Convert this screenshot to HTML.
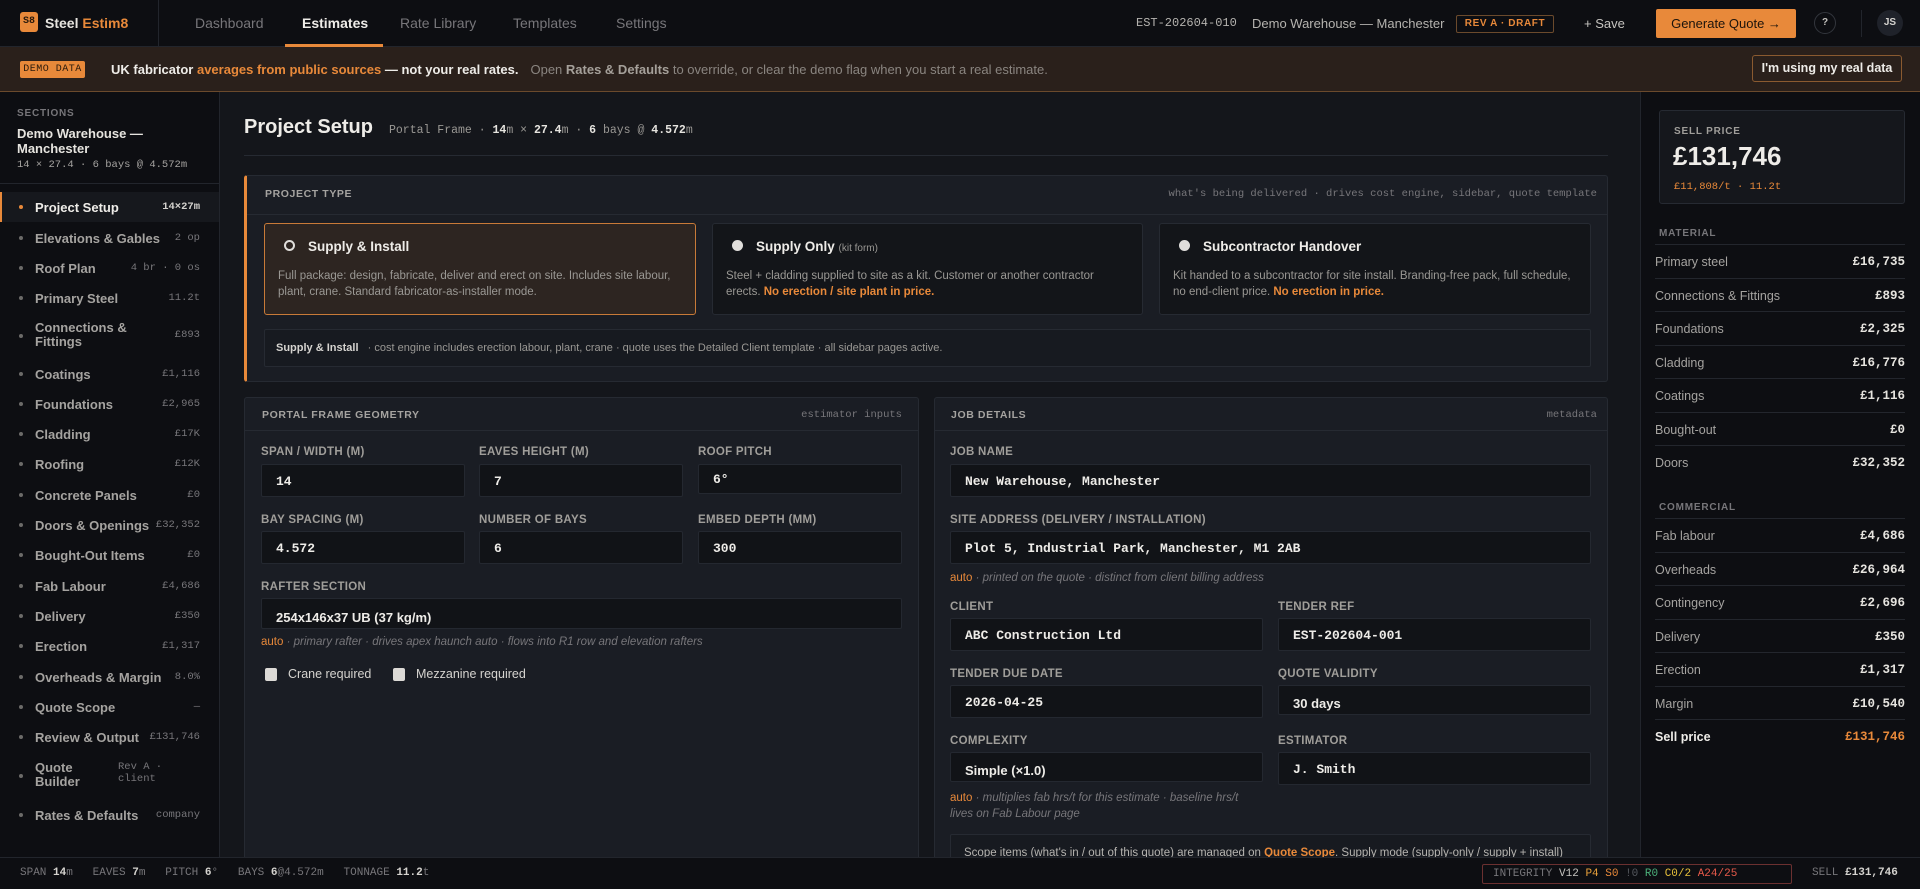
<!DOCTYPE html>
<html><head><meta charset="utf-8"><style>
*{box-sizing:border-box;margin:0;padding:0}
body{width:1920px;height:889px;overflow:hidden;background:#0d0e12;font-family:"Liberation Sans",sans-serif;color:#e6e4df;position:relative;font-size:13px}
.a{position:absolute;white-space:nowrap}
.m{font-family:"Liberation Mono",monospace}
.or{color:#e8893a}
.nav{position:absolute;left:0;top:0;width:1920px;height:47px;background:#0d0e12;border-bottom:1px solid #22252c}
.ban{position:absolute;left:0;top:47px;width:1920px;height:45px;background:#2a201b;border-bottom:1px solid #6b4a2c}
.side{position:absolute;left:0;top:92px;width:220px;height:765px;background:#0d0e12;border-right:1px solid #22252c}
.main{position:absolute;left:220px;top:92px;width:1420px;height:765px;background:#14161b}
.right{position:absolute;left:1640px;top:92px;width:280px;height:765px;background:#0d0e12;border-left:1px solid #22252c}
.pan{position:absolute;background:#1a1d24;border:1px solid #262a32;border-radius:3px}
.ph{font-size:10.5px;font-weight:bold;letter-spacing:.6px;color:#a5a3a0}
.lab{position:absolute;font-size:11.5px;font-weight:bold;color:#a09e9a;letter-spacing:.3px;white-space:nowrap}
.in{position:absolute;background:#111317;border:1px solid #242830;border-radius:2px;height:33px;font-family:"Liberation Mono",monospace;font-size:13px;color:#eeece8;padding:9px 14px;font-weight:bold;white-space:nowrap;overflow:hidden}
.hint{position:absolute;font-size:11.5px;font-style:italic;color:#77767a;white-space:nowrap}
.si{position:absolute;left:0;width:219px;height:28px}
.si .d{position:absolute;left:19px;top:12px;width:4px;height:4px;border-radius:2px;background:#6b6a68}
.si .t{position:absolute;left:35px;top:7px;font-size:13px;font-weight:bold;color:#a5a3a0;white-space:nowrap}
.si .v{position:absolute;right:19px;top:8px;font-family:"Liberation Mono",monospace;font-size:10.5px;color:#77767a}
.rr{position:absolute;left:1655px;width:250px;height:34px;border-top:1px solid #23262d;font-size:12.5px;color:#a5a3a0}
.rr span{position:absolute;top:10px}
.rr .v{right:0;font-family:"Liberation Mono",monospace;font-weight:bold;color:#e6e4df;font-size:12.5px}
.opt{position:absolute;top:223px;height:92px;background:#131519;border:1px solid #262a32;border-radius:3px}
.opt .r{position:absolute;left:19px;top:16px;width:11px;height:11px;border-radius:6px;background:#e0dedb}
.opt .h{position:absolute;left:43px;top:15px;font-size:13.5px;font-weight:bold;color:#eeece8;white-space:nowrap}
.opt .p{position:absolute;left:13px;top:44px;right:12px;font-size:11.5px;line-height:16px;color:#9a9894}
.cb{position:absolute;top:668px;width:12px;height:13px;border-radius:2px;background:#dcdad6}
</style></head><body>

<div class="nav">
  <div class="a" style="left:20px;top:12px;width:18px;height:20px;background:#e8893a;border-radius:3px;color:#2a1a0c;font-family:'Liberation Mono',monospace;font-size:10px;font-weight:bold;text-align:center;line-height:20px">S8</div>
  <div class="a" style="left:45px;top:15px;font-size:14px;font-weight:bold">Steel <span class="or">Estim8</span></div>
  <div class="a" style="left:158px;top:0;width:1px;height:47px;background:#22252c"></div>
  <div class="a" style="left:195px;top:15px;font-size:14px;color:#77767a">Dashboard</div>
  <div class="a" style="left:302px;top:15px;font-size:14px;font-weight:bold;color:#eeece8">Estimates</div>
  <div class="a" style="left:285px;top:44px;width:98px;height:3px;background:#e8893a"></div>
  <div class="a" style="left:400px;top:15px;font-size:14px;color:#77767a">Rate Library</div>
  <div class="a" style="left:513px;top:15px;font-size:14px;color:#77767a">Templates</div>
  <div class="a" style="left:616px;top:15px;font-size:14px;color:#77767a">Settings</div>
  <div class="a m" style="left:1136px;top:16px;font-size:12px;color:#b5b3af">EST-202604-010</div>
  <div class="a" style="left:1252px;top:16px;font-size:13px;color:#b5b3af">Demo Warehouse — Manchester</div>
  <div class="a" style="left:1456px;top:15px;width:98px;height:18px;border:1px solid #6b4a2c;border-radius:2px;color:#e8893a;font-size:10px;font-weight:bold;letter-spacing:.6px;text-align:center;line-height:16px">REV A · DRAFT</div>
  <div class="a" style="left:1584px;top:16px;font-size:13px;color:#c5c3bf">+ Save</div>
  <div class="a" style="left:1656px;top:9px;width:140px;height:29px;background:#e8893a;border-radius:2px;color:#1c140c;font-size:13px;text-align:center;line-height:29px">Generate Quote →</div>
  <div class="a" style="left:1814px;top:12px;width:22px;height:22px;border:1px solid #33363d;border-radius:11px;color:#c5c3bf;font-size:10px;font-weight:bold;text-align:center;line-height:20px">?</div>
  <div class="a" style="left:1861px;top:10px;width:1px;height:27px;background:#22252c"></div>
  <div class="a" style="left:1877px;top:10px;width:26px;height:26px;background:#1f222a;border-radius:13px;color:#d5d3cf;font-size:10px;font-weight:bold;text-align:center;line-height:26px">JS</div>
</div>

<div class="ban">
  <div class="a m" style="left:20px;top:14px;width:65px;height:17px;background:#e8893a;border-radius:2px;color:#2a1a0c;font-size:10px;letter-spacing:.5px;text-align:center;line-height:17px">DEMO DATA</div>
  <div class="a" style="left:111px;top:15px;font-size:13px;color:#eeece8"><b>UK fabricator <span class="or">averages from public sources</span> — not your real rates.</b><span style="margin-left:12px;color:#8a8580">Open <b style="color:#a5a09a">Rates &amp; Defaults</b> to override, or clear the demo flag when you start a real estimate.</span></div>
  <div class="a" style="left:1752px;top:8px;width:150px;height:27px;border:1px solid #8a5a30;border-radius:3px;font-size:12.5px;font-weight:bold;color:#eeece8;text-align:center;line-height:25px">I'm using my real data</div>
</div>

<div class="side">
  <div class="a" style="left:17px;top:16px;font-size:10px;font-weight:bold;letter-spacing:.8px;color:#77767a">SECTIONS</div>
  <div class="a" style="left:17px;top:34px;font-size:13px;font-weight:bold;line-height:15px;white-space:normal;width:150px">Demo Warehouse — Manchester</div>
  <div class="a m" style="left:17px;top:67px;font-size:10.5px;color:#a5a3a0">14 × 27.4 · 6 bays @ 4.572m</div>
  <div class="a" style="left:0;top:91px;width:219px;height:1px;background:#22252c"></div>
  <div class="si" style="top:100px;height:30px;background:#16181d"><div class="a" style="left:0;top:0;width:2px;height:30px;background:#e8893a"></div><div class="d" style="background:#e8893a;top:13px"></div><div class="t" style="color:#eeece8;top:8px">Project Setup</div><div class="v" style="color:#d5d3cf;font-weight:bold;top:9px">14×27m</div></div>
  <div class="si" style="top:132px"><div class="d"></div><div class="t">Elevations &amp; Gables</div><div class="v">2 op</div></div>
  <div class="si" style="top:162px"><div class="d"></div><div class="t">Roof Plan</div><div class="v">4 br · 0 os</div></div>
  <div class="si" style="top:192px"><div class="d"></div><div class="t">Primary Steel</div><div class="v">11.2t</div></div>
  <div class="si" style="top:222px;height:44px"><div class="d" style="top:20px"></div><div class="t" style="line-height:14px">Connections &amp;<br>Fittings</div><div class="v" style="top:15px">£893</div></div>
  <div class="si" style="top:268px"><div class="d"></div><div class="t">Coatings</div><div class="v">£1,116</div></div>
  <div class="si" style="top:298px"><div class="d"></div><div class="t">Foundations</div><div class="v">£2,965</div></div>
  <div class="si" style="top:328px"><div class="d"></div><div class="t">Cladding</div><div class="v">£17K</div></div>
  <div class="si" style="top:358px"><div class="d"></div><div class="t">Roofing</div><div class="v">£12K</div></div>
  <div class="si" style="top:389px"><div class="d"></div><div class="t">Concrete Panels</div><div class="v">£0</div></div>
  <div class="si" style="top:419px"><div class="d"></div><div class="t">Doors &amp; Openings</div><div class="v">£32,352</div></div>
  <div class="si" style="top:449px"><div class="d"></div><div class="t">Bought-Out Items</div><div class="v">£0</div></div>
  <div class="si" style="top:480px"><div class="d"></div><div class="t">Fab Labour</div><div class="v">£4,686</div></div>
  <div class="si" style="top:510px"><div class="d"></div><div class="t">Delivery</div><div class="v">£350</div></div>
  <div class="si" style="top:540px"><div class="d"></div><div class="t">Erection</div><div class="v">£1,317</div></div>
  <div class="si" style="top:571px"><div class="d"></div><div class="t">Overheads &amp; Margin</div><div class="v">8.0%</div></div>
  <div class="si" style="top:601px"><div class="d"></div><div class="t">Quote Scope</div><div class="v">—</div></div>
  <div class="si" style="top:631px"><div class="d"></div><div class="t">Review &amp; Output</div><div class="v">£131,746</div></div>
  <div class="si" style="top:662px;height:44px"><div class="d" style="top:20px"></div><div class="t" style="line-height:14px">Quote<br>Builder</div><div class="v" style="left:118px;right:auto;top:7px;line-height:12px">Rev A ·<br>client</div></div>
  <div class="si" style="top:709px"><div class="d"></div><div class="t">Rates &amp; Defaults</div><div class="v">company</div></div>
</div>

<div class="main"></div>
<div class="a" style="left:244px;top:116px;font-size:20px;font-weight:bold;color:#eeece8">Project Setup</div>
<div class="a m" style="left:389px;top:124px;font-size:11.5px;color:#9a9894">Portal Frame · <b style="color:#e6e4df">14</b>m × <b style="color:#e6e4df">27.4</b>m · <b style="color:#e6e4df">6</b> bays @ <b style="color:#e6e4df">4.572</b>m</div>
<div class="a" style="left:244px;top:155px;width:1364px;height:1px;background:#262a32"></div>

<div class="pan" style="left:244px;top:175px;width:1364px;height:207px;border-left:3px solid #e8893a">
  <div class="a ph" style="left:18px;top:12px">PROJECT TYPE</div>
  <div class="a m" style="right:10px;top:12px;font-size:10.5px;color:#77767a">what's being delivered · drives cost engine, sidebar, quote template</div>
  <div class="a" style="left:0;top:38px;width:1361px;height:1px;background:#262a32"></div>
</div>
<div class="opt" style="left:264px;width:432px;background:#2d2521;border-color:#c87a38"><div class="r" style="background:none;border:2.5px solid #e0dedb"></div><div class="h">Supply &amp; Install</div><div class="p">Full package: design, fabricate, deliver and erect on site. Includes site labour, plant, crane. Standard fabricator-as-installer mode.</div></div>
<div class="opt" style="left:712px;width:431px"><div class="r"></div><div class="h">Supply Only <span style="font-size:10px;font-weight:normal;color:#9a9894">(kit form)</span></div><div class="p">Steel + cladding supplied to site as a kit. Customer or another contractor erects. <b class="or">No erection / site plant in price.</b></div></div>
<div class="opt" style="left:1159px;width:432px"><div class="r"></div><div class="h">Subcontractor Handover</div><div class="p">Kit handed to a subcontractor for site install. Branding-free pack, full schedule, no end-client price. <b class="or">No erection in price.</b></div></div>
<div class="a" style="left:264px;top:329px;width:1327px;height:38px;background:#171a20;border:1px solid #262a32;border-radius:2px"></div>
<div class="a" style="left:276px;top:342px;font-size:11px;color:#9a9894"><b style="color:#d5d3cf">Supply &amp; Install</b> &nbsp; · cost engine includes erection labour, plant, crane · quote uses the Detailed Client template · all sidebar pages active.</div>

<div class="pan" style="left:244px;top:397px;width:675px;height:470px">
  <div class="a ph" style="left:17px;top:11px">PORTAL FRAME GEOMETRY</div>
  <div class="a m" style="right:16px;top:11px;font-size:10.5px;color:#77767a">estimator inputs</div>
  <div class="a" style="left:0;top:32px;width:673px;height:1px;background:#262a32"></div>
</div>
<div class="lab" style="left:261px;top:446px">SPAN / WIDTH (M)</div>
<div class="lab" style="left:479px;top:446px">EAVES HEIGHT (M)</div>
<div class="lab" style="left:698px;top:446px">ROOF PITCH</div>
<div class="in" style="left:261px;top:464px;width:204px">14</div>
<div class="in" style="left:479px;top:464px;width:204px">7</div>
<div class="in" style="left:698px;top:464px;width:204px;height:30px;padding-top:7px">6°</div>
<div class="lab" style="left:261px;top:514px">BAY SPACING (M)</div>
<div class="lab" style="left:479px;top:514px">NUMBER OF BAYS</div>
<div class="lab" style="left:698px;top:514px">EMBED DEPTH (MM)</div>
<div class="in" style="left:261px;top:531px;width:204px">4.572</div>
<div class="in" style="left:479px;top:531px;width:204px">6</div>
<div class="in" style="left:698px;top:531px;width:204px">300</div>
<div class="lab" style="left:261px;top:581px">RAFTER SECTION</div>
<div class="in" style="left:261px;top:598px;width:641px;height:31px;font-family:'Liberation Sans',sans-serif;padding-top:11px">254x146x37 UB (37 kg/m)</div>
<div class="hint" style="left:261px;top:636px"><span class="or" style="font-style:normal">auto</span> · primary rafter · drives apex haunch auto · flows into R1 row and elevation rafters</div>
<div class="cb" style="left:265px"></div><div class="a" style="left:288px;top:667px;font-size:12.5px;color:#d5d3cf">Crane required</div>
<div class="cb" style="left:393px"></div><div class="a" style="left:416px;top:667px;font-size:12.5px;color:#d5d3cf">Mezzanine required</div>

<div class="pan" style="left:934px;top:397px;width:674px;height:470px">
  <div class="a ph" style="left:16px;top:11px">JOB DETAILS</div>
  <div class="a m" style="right:10px;top:11px;font-size:10.5px;color:#77767a">metadata</div>
  <div class="a" style="left:0;top:32px;width:672px;height:1px;background:#262a32"></div>
</div>
<div class="lab" style="left:950px;top:446px">JOB NAME</div>
<div class="in" style="left:950px;top:464px;width:641px">New Warehouse, Manchester</div>
<div class="lab" style="left:950px;top:514px">SITE ADDRESS (DELIVERY / INSTALLATION)</div>
<div class="in" style="left:950px;top:531px;width:641px">Plot 5, Industrial Park, Manchester, M1 2AB</div>
<div class="hint" style="left:950px;top:572px"><span class="or" style="font-style:normal">auto</span> · printed on the quote · distinct from client billing address</div>
<div class="lab" style="left:950px;top:601px">CLIENT</div>
<div class="lab" style="left:1278px;top:601px">TENDER REF</div>
<div class="in" style="left:950px;top:618px;width:313px">ABC Construction Ltd</div>
<div class="in" style="left:1278px;top:618px;width:313px">EST-202604-001</div>
<div class="lab" style="left:950px;top:668px">TENDER DUE DATE</div>
<div class="lab" style="left:1278px;top:668px">QUOTE VALIDITY</div>
<div class="in" style="left:950px;top:685px;width:313px">2026-04-25</div>
<div class="in" style="left:1278px;top:685px;width:313px;height:30px;font-family:'Liberation Sans',sans-serif;padding-top:10px">30 days</div>
<div class="lab" style="left:950px;top:735px">COMPLEXITY</div>
<div class="lab" style="left:1278px;top:735px">ESTIMATOR</div>
<div class="in" style="left:950px;top:752px;width:313px;height:30px;font-family:'Liberation Sans',sans-serif;padding-top:10px">Simple (×1.0)</div>
<div class="in" style="left:1278px;top:752px;width:313px">J. Smith</div>
<div class="hint" style="left:950px;top:790px;line-height:16px"><span class="or" style="font-style:normal">auto</span> · multiplies fab hrs/t for this estimate · baseline hrs/t<br>lives on Fab Labour page</div>
<div class="a" style="left:950px;top:834px;width:641px;height:30px;background:#171a20;border:1px solid #262a32;border-radius:2px"></div>
<div class="a" style="left:964px;top:847px;font-size:11.5px;color:#b5b3af">Scope items (what's in / out of this quote) are managed on <b class="or">Quote Scope</b>. Supply mode (supply-only / supply + install)</div>

<div class="right"></div>
<div class="a" style="left:1659px;top:110px;width:246px;height:94px;background:#15171c;border:1px solid #262a32;border-radius:3px">
  <div class="a" style="left:14px;top:15px;font-size:10px;font-weight:bold;letter-spacing:.8px;color:#a09e9a">SELL PRICE</div>
  <div class="a" style="left:13px;top:30px;font-size:26px;font-weight:bold;color:#eeece8">£131,746</div>
  <div class="a m" style="left:14px;top:70px;font-size:10.5px;color:#e8893a">£11,808/t · 11.2t</div>
</div>
<div class="a" style="left:1659px;top:228px;font-size:10px;font-weight:bold;letter-spacing:.8px;color:#77767a">MATERIAL</div>
<div class="rr" style="top:244px"><span>Primary steel</span><span class="v">£16,735</span></div>
<div class="rr" style="top:278px"><span>Connections &amp; Fittings</span><span class="v">£893</span></div>
<div class="rr" style="top:311px"><span>Foundations</span><span class="v">£2,325</span></div>
<div class="rr" style="top:345px"><span>Cladding</span><span class="v">£16,776</span></div>
<div class="rr" style="top:378px"><span>Coatings</span><span class="v">£1,116</span></div>
<div class="rr" style="top:412px"><span>Bought-out</span><span class="v">£0</span></div>
<div class="rr" style="top:445px"><span>Doors</span><span class="v">£32,352</span></div>
<div class="a" style="left:1659px;top:502px;font-size:10px;font-weight:bold;letter-spacing:.8px;color:#77767a">COMMERCIAL</div>
<div class="rr" style="top:518px"><span>Fab labour</span><span class="v">£4,686</span></div>
<div class="rr" style="top:552px"><span>Overheads</span><span class="v">£26,964</span></div>
<div class="rr" style="top:585px"><span>Contingency</span><span class="v">£2,696</span></div>
<div class="rr" style="top:619px"><span>Delivery</span><span class="v">£350</span></div>
<div class="rr" style="top:652px"><span>Erection</span><span class="v">£1,317</span></div>
<div class="rr" style="top:686px"><span>Margin</span><span class="v">£10,540</span></div>
<div class="rr" style="top:719px"><span style="font-weight:bold;color:#eeece8">Sell price</span><span class="v" style="color:#e8893a">£131,746</span></div>

<div class="a" style="left:0;top:857px;width:1920px;height:32px;background:#0d0e12;border-top:1px solid #22252c"></div>
<div class="a m" style="left:20px;top:867px;font-size:11px;color:#77767a">SPAN <b style="color:#d5d3cf">14</b>m &nbsp; EAVES <b style="color:#d5d3cf">7</b>m &nbsp; PITCH <b style="color:#d5d3cf">6</b>° &nbsp; BAYS <b style="color:#d5d3cf">6</b>@4.572m &nbsp; TONNAGE <b style="color:#d5d3cf">11.2</b>t</div>
<div class="a m" style="left:1482px;top:864px;width:310px;height:20px;border:1px solid #6b3030;border-radius:2px;font-size:11px;line-height:18px;padding-left:10px;color:#77767a">INTEGRITY <span style="color:#c5c3bf">V12</span> <span style="color:#e8a03a">P4</span> <span style="color:#e8893a">S0</span> <span style="color:#55585e">!0</span> <span style="color:#4bb07a">R0</span> <span style="color:#e8c03a">C0/2</span> <span style="color:#e85a4a">A24/25</span></div>
<div class="a m" style="left:1812px;top:867px;font-size:11px;color:#77767a">SELL <b style="color:#d5d3cf">£131,746</b></div>
</body></html>
